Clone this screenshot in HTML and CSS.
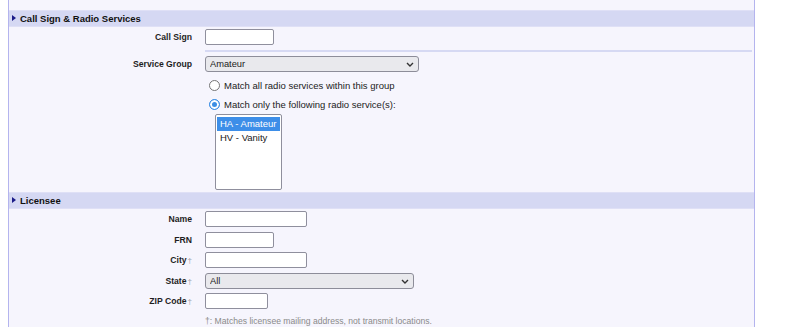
FILE: index.html
```html
<!DOCTYPE html>
<html lang="en">
<head>
<meta charset="utf-8">
<title>License Search</title>
<link rel="stylesheet" href="styles.css">
</head>
<body>
<div class="panel">
  <div class="section-head"><span class="tri"></span>Call Sign &amp; Radio Services</div>

  <div class="row">
    <label class="lbl" for="callsign">Call Sign</label>
    <div class="fld"><input id="callsign" class="txt w69" type="text"></div>
  </div>

  <div class="sep"></div>

  <div class="row row-svc">
    <label class="lbl" for="svcgroup">Service Group</label>
    <div class="fld">
      <span class="sel w214">
        <select id="svcgroup"><option>Amateur</option></select>
        <svg class="chev" width="8" height="5" viewBox="0 0 8 5"><path d="M1 1 L4 4 L7 1" fill="none" stroke="#333" stroke-width="1.4"/></svg>
      </span>
    </div>
  </div>

  <div class="row radio-row">
    <span class="lbl"></span>
    <div class="fld"><label class="radio"><input type="radio" name="svcmode">Match all radio services within this group</label></div>
  </div>
  <div class="row radio-row">
    <span class="lbl"></span>
    <div class="fld"><label class="radio"><input type="radio" name="svcmode" checked>Match only the following radio service(s):</label></div>
  </div>

  <div class="row list-row">
    <span class="lbl"></span>
    <div class="fld">
      <div class="listbox" role="listbox" aria-multiselectable="true">
        <div class="opt selected" role="option" aria-selected="true">HA - Amateur</div>
        <div class="opt" role="option">HV - Vanity</div>
      </div>
    </div>
  </div>

  <div class="section-head"><span class="tri"></span>Licensee</div>

  <div class="rows-lic">
    <div class="row lic">
      <label class="lbl" for="name">Name</label>
      <div class="fld"><input id="name" class="txt w102" type="text"></div>
    </div>
    <div class="row lic">
      <label class="lbl" for="frn">FRN</label>
      <div class="fld"><input id="frn" class="txt w69" type="text"></div>
    </div>
    <div class="row lic">
      <label class="lbl" for="city">City<span class="dag">†</span></label>
      <div class="fld"><input id="city" class="txt w102" type="text"></div>
    </div>
    <div class="row lic">
      <label class="lbl" for="state">State<span class="dag">†</span></label>
      <div class="fld">
        <span class="sel w209">
          <select id="state"><option>All</option></select>
          <svg class="chev" width="8" height="5" viewBox="0 0 8 5"><path d="M1 1 L4 4 L7 1" fill="none" stroke="#333" stroke-width="1.4"/></svg>
        </span>
      </div>
    </div>
    <div class="row lic">
      <label class="lbl" for="zip">ZIP Code<span class="dag">†</span></label>
      <div class="fld"><input id="zip" class="txt w63" type="text"></div>
    </div>
    <div class="row note-row">
      <span class="lbl"></span>
      <div class="fld note">†: Matches licensee mailing address, not transmit locations.</div>
    </div>
  </div>
</div>
</body>
</html>
```

FILE: styles.css
```css
html, body {
  margin: 0;
  padding: 0;
  background: #ffffff;
}

body {
  font-family: "Liberation Sans", Arial, sans-serif;
  font-size: 9.5px;
  color: #222222;
  height: 327px;
  overflow: hidden;
}

.panel {
  margin-left: 8px;
  width: 747px;
  box-sizing: border-box;
  border-left: 1px solid #b4b4ee;
  border-right: 1px solid #b4b4ee;
  background: #f6f5fd;
  padding-top: 10px;
  min-height: 340px;
}

.section-head {
  height: 15px;
  line-height: 15px;
  background: #d5d8f3;
  border-top: 1px solid #dfe0f6;
  border-bottom: 1px solid #dfe0f6;
  font-weight: bold;
  font-size: 9.5px;
  color: #111111;
  display: flex;
  align-items: center;
  padding-left: 3px;
}

.tri {
  width: 0;
  height: 0;
  border-top: 3.5px solid transparent;
  border-bottom: 3.5px solid transparent;
  border-left: 4px solid #1b1b88;
  margin-right: 4px;
  margin-top: -2px;
}

.row {
  display: grid;
  grid-template-columns: 196px 1fr;
  align-items: center;
  padding: 2px 0;
}

.lbl {
  text-align: right;
  padding-right: 13px;
  font-weight: bold;
  font-size: 8.65px;
  color: #1e1e1e;
}

.dag {
  font-weight: normal;
  color: #a0a0a8;
  font-size: 8px;
  margin-left: 1px;
}

.fld {
  display: flex;
  align-items: center;
}

.txt {
  box-sizing: border-box;
  height: 16px;
  border: 1px solid #8f8f9d;
  border-radius: 2px;
  background: #ffffff;
  margin: 0;
  padding: 0 3px;
  font-family: "Liberation Sans", Arial, sans-serif;
  font-size: 9.3px;
}

.w63 { width: 63px; }
.w69 { width: 69px; }
.w102 { width: 102px; }
.w209 { width: 209px; }
.w214 { width: 214px; }

.sep {
  height: 0;
  border-top: 2px solid #d6d9f3;
  margin: 3px 2px 0 196px;
}

.row-svc {
  padding: 4px 0 3.5px;
}

.sel {
  position: relative;
  display: inline-block;
  height: 16px;
}

.sel select {
  appearance: none;
  -webkit-appearance: none;
  box-sizing: border-box;
  width: 100%;
  height: 16px;
  margin: 0;
  padding: 0 14px 0 4px;
  border: 1px solid #8d8d99;
  border-radius: 3px;
  background: #e9e9ed;
  color: #1a1a1a;
  font-family: "Liberation Sans", Arial, sans-serif;
  font-size: 9.3px;
  line-height: 14px;
}

.chev {
  position: absolute;
  right: 5px;
  top: 6px;
  pointer-events: none;
}

.radio-row {
  padding: 0;
  height: 19px;
}

.radio {
  display: flex;
  align-items: center;
  font-size: 9.5px;
  color: #222222;
}

.radio input {
  appearance: none;
  -webkit-appearance: none;
  box-sizing: border-box;
  width: 11px;
  height: 11px;
  margin: 0 4px 0 4px;
  border: 1px solid #767676;
  border-radius: 50%;
  background: #ffffff;
}

.radio input:checked {
  border: 1.5px solid #3b8ee4;
  background: #3b8ee4;
  box-shadow: inset 0 0 0 2px #ffffff;
}

.list-row {
  padding: 0.5px 0 2px;
}

.listbox {
  box-sizing: border-box;
  width: 67px;
  height: 76px;
  margin-left: 10px;
  padding: 2px 1px;
  border: 1px solid #8f8f9d;
  border-radius: 2px;
  background: #ffffff;
}

.opt {
  height: 14px;
  line-height: 14px;
  padding-left: 3px;
  font-size: 9.5px;
  color: #1a1a1a;
  white-space: nowrap;
}

.opt.selected {
  background: #3d8ee8;
  color: #ffffff;
}

.lic {
  padding: 2.25px 0;
}

.note-row {
  padding: 4px 0 0;
}

.note {
  font-size: 8.6px;
  color: #8a8a8a;
}
```
